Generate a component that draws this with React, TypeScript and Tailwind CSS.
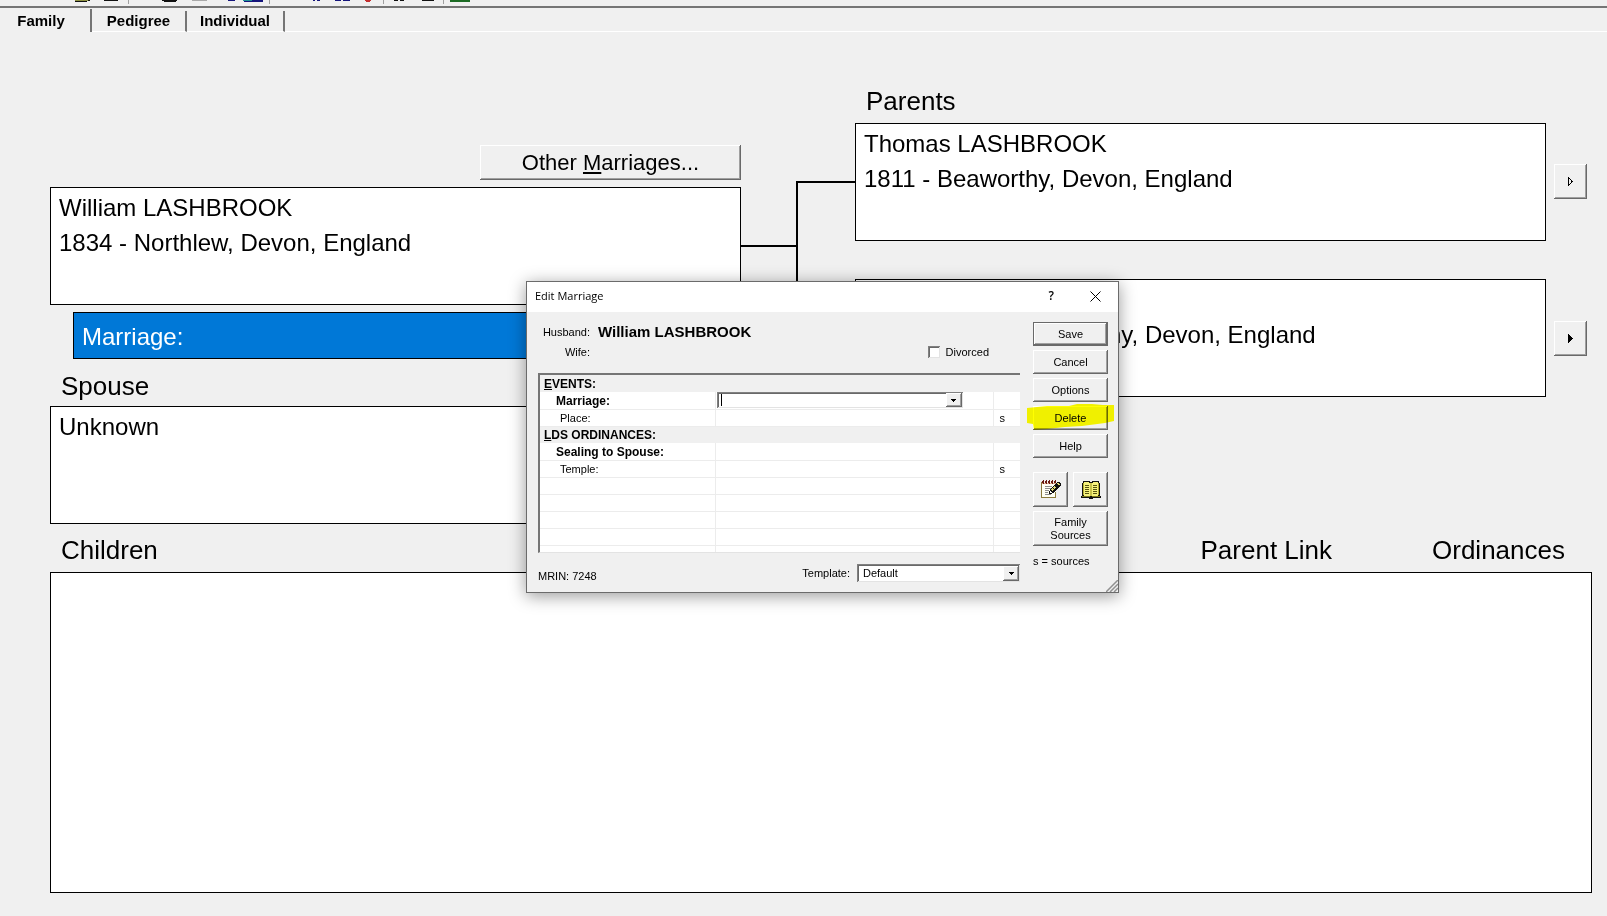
import { useState } from "react";
import type { ReactNode } from "react";

const raised =
  "bg-[#f0f0f0] shadow-[inset_-1px_-1px_#696969,inset_1px_1px_#ffffff,inset_-2px_-2px_#a0a0a0]";
const sunken =
  "bg-white shadow-[inset_1px_1px_#808080,inset_-1px_-1px_#e3e3e3,inset_2px_2px_#696969]";

const tabs = [
  { name: "Family", width: "w-[92px]" },
  { name: "Pedigree", width: "w-[95px]" },
  { name: "Individual", width: "w-[98px]" },
];

type Row = { label: string; bold?: boolean; source?: boolean; editable?: boolean };

const sections: { title: string; rows: Row[] }[] = [
  {
    title: "EVENTS:",
    rows: [
      { label: "Marriage:", bold: true, editable: true },
      { label: "Place:", source: true },
    ],
  },
  {
    title: "LDS ORDINANCES:",
    rows: [
      { label: "Sealing to Spouse:", bold: true },
      { label: "Temple:", source: true },
    ],
  },
];

const ToolbarIcons = () => (
  <svg width="480" height="6" shapeRendering="crispEdges" aria-hidden="true">
    <path d="M75 0h13v1h-13z" fill="#8f9140" />
    <path d="M75 1h12v1h-12zM88 0h2v1h-2zM104 0h14v1h-14zM162 0h15v1h-15zM164 1h12v1h-12zM394 0h4v1h-4zM400 0h4v1h-4zM422 0h12v1h-12z" fill="#111" />
    <path d="M192 0h15v1h-15z" fill="#a9a9a9" />
    <path d="M228 0h7v1h-7zM252 0h11v1h-11zM244 1h19v1h-19zM313 0h2v1h-2zM317 0h3v1h-3zM335 0h6v1h-6zM343 0h7v1h-7z" fill="#15157c" />
    <path d="M243 0h9v1h-9z" fill="#1f8f95" />
    <path d="M365 0h6v1h-6zM366 1h4v1h-4z" fill="#c43030" />
    <path d="M450 0h20v2h-20z" fill="#1c6b24" />
    <path d="M128 0h1v4h-1zM269 0h1v4h-1zM383 0h1v4h-1zM443 0h1v4h-1z" fill="#a0a0a0" />
  </svg>
);

const NotepadIcon = () => (
  <svg width="20" height="19" viewBox="0 0 20 19" shapeRendering="crispEdges" aria-hidden="true">
    <path d="M1 2h14v16H1z" fill="#fffff4" />
    <path d="M0 2h1v16H0zM1 17h13v1H1zM14 12h1v6h-1z" fill="#8a7a3c" />
    <path d="M1 3h14v1H1z" fill="#d9a58c" />
    <path d="M2 0h1v1H2zM5 0h1v1H5zM8 0h1v1H8zM11 0h1v1h-1zM14 0h1v1h-1zM1 1h2v2H1zM4 1h2v2H4zM7 1h2v2H7zM10 1h2v2h-2zM13 1h2v2h-2zM2 3h1v1H2zM5 3h1v1H5zM8 3h1v1H8zM11 3h1v1h-1z" fill="#6b1a10" />
    <path d="M4 6h7v1H4zM4 8h6v1H4zM4 10h4v1H4zM4 12h3v1H4zM4 14h6v1H4z" fill="#8c8c8c" />
    <path d="M16 2h3v1h1v3h-1v1h-1v1h-1v1h-1v1h-1v1h-1v1h-1v1h-2v1H8v-3h1V9h1V8h1V7h1V6h1V5h1V4h1V3h1z" fill="#111" />
    <path d="M16 3h2v1h1v1h-2v-1h-1zM13 6h1v1h1v1h-1v1h-1V8h-1V7h1zM11 8h1v1h1v1h-1v1h-1v-1h-1V9h1z" fill="#e3dc78" />
    <path d="M9 11h1v1h1v1H9z" fill="#fff" />
  </svg>
);

const BookIcon = () => (
  <svg width="20" height="18" viewBox="0 0 20 18" shapeRendering="crispEdges" aria-hidden="true">
    <path d="M2 0h7v1h2V0h7v2h1v13h1v2h-8v1H8v-1H0v-2h1V2h1z" fill="#111" />
    <path d="M3 1h5v1h1v13H3z" fill="#f6f27d" />
    <path d="M12 1h5v14h-6V2h1z" fill="#f6f27d" />
    <path d="M2 2h1v12H2zM17 2h1v12h-1z" fill="#b4ad2d" />
    <path d="M1 15h8v1H1zM11 15h8v1h-8z" fill="#7d7a1c" />
    <path d="M4 4h4v1H4zM4 6h4v1H4zM4 8h4v1H4zM4 10h4v1H4zM4 12h4v1H4zM12 4h4v1h-4zM12 6h4v1h-4zM12 8h4v1h-4zM12 10h4v1h-4zM12 12h4v1h-4z" fill="#56540f" />
    <path d="M9 2h2v13H9z" fill="#c8c24a" />
  </svg>
);

const DownArrow = () => (
  <svg width="5" height="3" viewBox="0 0 5 3" shapeRendering="crispEdges" aria-hidden="true">
    <path d="M0 0h5v1H4v1H3v1H2V2H1V1H0z" fill="#000" />
  </svg>
);

const RightArrow = ({ filled }: { filled?: boolean }) => (
  <svg width="5" height="9" viewBox="0 0 5 9" shapeRendering="crispEdges" aria-hidden="true">
    <path d="M0 0h1v1h1v1h1v1h1v1h1v1H4v1H3v1H2v1H1v1H0z" fill="#000" />
    {!filled && <path d="M1 2h1v1h1v3H2v1H1z" fill="#f0f0f0" />}
  </svg>
);

const PersonBox = ({ children }: { children?: ReactNode }) => (
  <div className="h-[118px] border border-black bg-white pl-2 pt-[2px] text-2xl leading-[35px] whitespace-nowrap overflow-hidden">
    {children}
  </div>
);

const DialogButton = ({ label, onClick }: { label: string; onClick?: () => void }) => (
  <button type="button" onClick={onClick} className={`h-6 w-full ${raised}`}>
    {label}
  </button>
);

const EditMarriage = ({ onClose }: { onClose: () => void }) => {
  const [date, setDate] = useState("");
  const [divorced, setDivorced] = useState(false);

  return (
    <div
      role="dialog"
      aria-labelledby="dialog-title"
      className="absolute left-[526px] top-[281px] w-[593px] border border-[#6b6b6b] bg-[#f0f0f0] text-[11px] leading-4 shadow-[0_3px_16px_rgba(0,0,0,0.4)]"
    >
      <div className="flex h-[30px] items-center bg-white pb-[2px] pl-2 pr-[17px]">
        <h2
          id="dialog-title"
          className="flex-1 font-['Open_Sans','Noto_Sans',sans-serif] text-[11px]"
        >
          Edit Marriage
        </h2>
        <button
          type="button"
          aria-label="What's this"
          className="mr-9 font-['Open_Sans','Noto_Sans',sans-serif] text-xs font-semibold"
        >
          ?
        </button>
        <button type="button" aria-label="Close" onClick={onClose}>
          <svg width="11" height="11" viewBox="0 0 11 11" aria-hidden="true">
            <path d="M0.5 0.5l10 10M10.5 0.5l-10 10" stroke="#000" fill="none" />
          </svg>
        </button>
      </div>

      <div className="flex gap-[13px] pb-2 pl-[11px] pr-[10px] pt-[10px]">
        <div className="min-w-0 flex-1">
          <div className="flex h-5 items-center gap-2">
            <span className="w-[52px] text-right">Husband:</span>
            <span className="text-[15px] font-bold">William LASHBROOK</span>
          </div>
          <div className="flex h-5 items-center justify-between pr-[31px]">
            <span className="w-[52px] text-right">Wife:</span>
            <label className="flex items-center gap-[6px]">
              <input
                type="checkbox"
                checked={divorced}
                onChange={(e) => setDivorced(e.target.checked)}
                className={`size-3 appearance-none checked:bg-black ${sunken}`}
              />
              Divorced
            </label>
          </div>

          <div className="mt-[11px] h-[180px] overflow-hidden border-l-2 border-t-2 border-[#757575] border-b border-b-[#e3e3e3] bg-white">
            <table className="w-full table-fixed border-collapse">
              <colgroup>
                <col className="w-[175px]" />
                <col />
                <col className="w-[26px]" />
              </colgroup>
              {sections.map((section) => (
                <tbody key={section.title}>
                  <tr className="h-[17px] bg-[#f0f0f0]">
                    <th colSpan={3} className="p-0 pl-1 text-left text-xs leading-4">
                      <span className="underline">{section.title[0]}</span>
                      {section.title.slice(1)}
                    </th>
                  </tr>
                  {section.rows.map((row) => (
                    <tr key={row.label} className="h-[17px]">
                      <th
                        className={
                          row.bold
                            ? "border-b border-r border-[#ececec] p-0 pl-4 pt-[2px] text-left text-xs leading-[14px]"
                            : "border-b border-r border-[#ececec] p-0 pl-5 text-left font-normal leading-4"
                        }
                      >
                        {row.label}
                      </th>
                      <td className="border-b border-r border-[#ececec] p-0 pl-px">
                        {row.editable && (
                          <div className={`flex h-4 w-[246px] items-stretch p-px ${sunken}`}>
                            {date === "" && <span className="my-px ml-[3px] w-px bg-black" />}
                            <input
                              type="text"
                              aria-label="Marriage date"
                              value={date}
                              onChange={(e) => setDate(e.target.value)}
                              className="min-w-0 flex-1 bg-transparent pl-[3px] outline-none"
                            />
                            <button
                              type="button"
                              aria-label="Show dates"
                              className={`flex w-4 items-center justify-center ${raised}`}
                            >
                              <DownArrow />
                            </button>
                          </div>
                        )}
                      </td>
                      <td className="border-b border-[#ececec] p-0 pl-[5px] leading-4">
                        {row.source && "s"}
                      </td>
                    </tr>
                  ))}
                </tbody>
              ))}
              <tbody>
                {[0, 1, 2, 3, 4].map((i) => (
                  <tr key={i} className="h-[17px]">
                    <td className="border-b border-r border-[#ececec] p-0" />
                    <td className="border-b border-r border-[#ececec] p-0" />
                    <td className="border-b border-[#ececec] p-0" />
                  </tr>
                ))}
              </tbody>
            </table>
          </div>

          <div className="flex items-center pt-[9px]">
            <span className="flex-1 pt-[6px]">MRIN: 7248</span>
            <label htmlFor="template" className="mr-[7px]">
              Template:
            </label>
            <div className="relative">
              <select
                id="template"
                className={`block h-[18px] w-[163px] appearance-none pl-[6px] leading-4 ${sunken}`}
              >
                <option>Default</option>
              </select>
              <span
                className={`pointer-events-none absolute bottom-px right-px top-[2px] flex w-4 items-center justify-center ${raised}`}
              >
                <DownArrow />
              </span>
            </div>
          </div>
        </div>

        <div className="w-[75px]">
          <div className="flex flex-col gap-1">
            <button
              type="button"
              className="h-6 w-full border border-[#696969] bg-[#f0f0f0] shadow-[inset_-1px_-1px_#696969,inset_1px_1px_#ffffff,inset_-2px_-2px_#a0a0a0]"
            >
              Save
            </button>
            <DialogButton label="Cancel" onClick={onClose} />
            <DialogButton label="Options" />
            <div className="relative">
              <DialogButton label="Delete" />
              {/* highlighter stroke */}
              <svg
                width="88"
                height="27"
                viewBox="0 0 88 27"
                className="pointer-events-none absolute -left-[6px] -top-[2px] mix-blend-multiply"
                aria-hidden="true"
              >
                <path
                  d="M0 4L20 2 42 2 50 0 65 0 76 1 87 1V17L78 19 55 22 38 23 20 25 7 26 6 20 0 19z"
                  fill="#ffff00"
                />
              </svg>
            </div>
            <DialogButton label="Help" />
          </div>
          <div className="mt-[14px] flex justify-between">
            <button
              type="button"
              aria-label="Notes"
              className={`flex h-[35px] w-[35px] items-center justify-center ${raised}`}
            >
              <NotepadIcon />
            </button>
            <button
              type="button"
              aria-label="Sources"
              className={`flex h-[35px] w-[35px] items-center justify-center ${raised}`}
            >
              <BookIcon />
            </button>
          </div>
          <button type="button" className={`mt-1 h-[35px] w-full leading-[13px] ${raised}`}>
            Family
            <br />
            Sources
          </button>
          <p className="mt-[7px]">s = sources</p>
        </div>
      </div>

      <svg
        width="12"
        height="12"
        viewBox="0 0 12 12"
        className="absolute bottom-0 right-0"
        aria-hidden="true"
      >
        <path d="M0 12L12 0M4 12L12 4M8 12L12 8" stroke="#909090" strokeWidth="1.5" />
      </svg>
    </div>
  );
};

const App = () => {
  const [open, setOpen] = useState(true);
  const [tab, setTab] = useState("Family");

  return (
    <div className="relative flex min-h-screen flex-col bg-[#f0f0f0] pb-[23px] font-['Liberation_Sans',Arial,sans-serif] text-black">
      <header className="h-2 border-b-2 border-[#757575]">
        <ToolbarIcons />
      </header>
      <nav className="flex h-6 items-end text-[15px] font-bold leading-5">
        {tabs.map(({ name, width }) => (
          <button
            key={name}
            type="button"
            onClick={() => setTab(name)}
            className={
              tab === name
                ? `h-[23px] border-r-2 border-[#757575] pr-2 ${width}`
                : `h-[21px] border-b border-r-2 border-b-white border-r-[#757575] ${width}`
            }
          >
            {name}
          </button>
        ))}
        <div className="flex-1 self-stretch border-b border-white" />
      </nav>

      <main className="flex flex-1 flex-col pl-[50px] pr-[15px]">
        <div className="grid grid-cols-[1fr_114px_1fr_41px] items-start pr-[5px]">
          <section className="pt-[113px]">
            <button
              type="button"
              className={`ml-auto block h-[35px] w-[261px] text-[22px] ${raised}`}
            >
              Other <span className="underline underline-offset-2">M</span>arriages...
            </button>
            <div className="mt-[7px]">
              <PersonBox>
                <p>William LASHBROOK</p>
                <p>1834 - Northlew, Devon, England</p>
              </PersonBox>
            </div>
            <button
              type="button"
              onClick={() => setOpen(true)}
              className="ml-[23px] mt-[7px] block h-[47px] w-[calc(100%-23px)] border border-black bg-[#0078d7] pl-2 pt-[2px] text-left text-2xl text-white"
            >
              Marriage:
            </button>
            <h2 className="flex h-[47px] items-end pl-[11px] text-[26px] leading-10">Spouse</h2>
            <PersonBox>
              <p>Unknown</p>
            </PersonBox>
          </section>

          <div className="flex pt-[149px]">
            <div className="flex-1 pt-16">
              <div className="h-[2px] bg-black" />
            </div>
            <div className="h-[158px] w-[59px] border-y-2 border-l-2 border-black" />
          </div>

          <section className="pt-[49px]">
            <h2 className="pb-[2px] pl-[11px] text-[26px] leading-10">Parents</h2>
            <PersonBox>
              <p>Thomas LASHBROOK</p>
              <p>1811 - Beaworthy, Devon, England</p>
            </PersonBox>
            <div className="mt-[38px]">
              <PersonBox>
                <p className="pl-[244px] pt-[35px]">hy, Devon, England</p>
              </PersonBox>
            </div>
          </section>

          <div className="flex flex-col items-end gap-[122px] pt-[132px]">
            <button
              type="button"
              aria-label="Go to father"
              className={`flex h-[35px] w-[33px] items-center justify-center ${raised}`}
            >
              <RightArrow />
            </button>
            <button
              type="button"
              aria-label="Go to mother"
              className={`flex h-[35px] w-[33px] items-center justify-center ${raised}`}
            >
              <RightArrow filled />
            </button>
          </div>
        </div>

        <div className="flex h-12 items-end gap-[100px] pb-[2px] pl-[11px] pr-[27px] text-[26px] leading-10">
          <h2 className="flex-1">Children</h2>
          <h2>Parent Link</h2>
          <h2>Ordinances</h2>
        </div>
        <div className="flex-1 border border-black bg-white" />
      </main>

      {open && <EditMarriage onClose={() => setOpen(false)} />}
    </div>
  );
};

export default App;
